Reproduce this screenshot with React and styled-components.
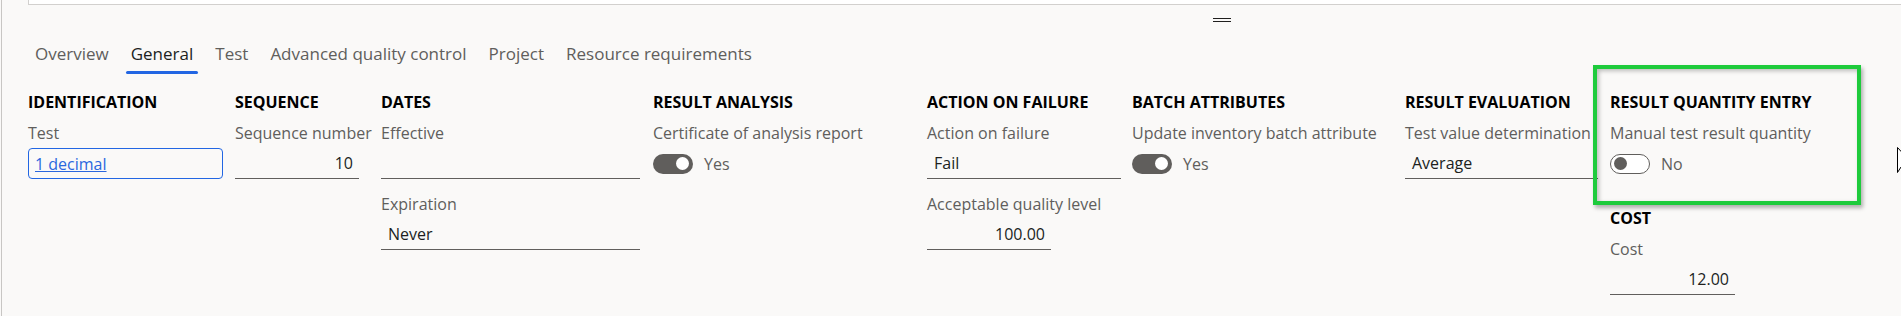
import styled, { createGlobalStyle } from "styled-components";

const GlobalStyle = createGlobalStyle`
  html, body {
    margin: 0;
    padding: 0;
    background: #faf9f8;
  }
  body {
    font-family: "Open Sans", "Noto Sans", sans-serif;
    font-size: 16px;
    color: #201f1e;
  }
`;

const Page = styled.div`
  position: relative;
  margin-left: 1px;
  height: 316px;
  border-left: 1px solid #c8c6c4;
  background: #faf9f8;
  overflow: hidden;
`;

const TopStrip = styled.div`
  margin-left: 26px;
  height: 4px;
  background: #fff;
  border-left: 1px solid #d2d0ce;
  border-bottom: 1px solid #d2d0ce;
`;

const SplitterRow = styled.div`
  display: flex;
  margin-top: 13px;
  padding-left: 1211px;
`;

const Grip = styled.div`
  width: 18px;
  height: 2px;
  border-top: 1px solid #201f1e;
  border-bottom: 1px solid #201f1e;
`;

const TabBar = styled.div`
  display: flex;
  margin-top: 21px;
  padding-left: 22px;
`;

const Tab = styled.div`
  padding: 0 11px;
  height: 31px;
  line-height: 22px;
  font-size: 17px;
  color: ${(p) => (p.$active ? "#201f1e" : "#605e5c")};
  white-space: nowrap;

  span {
    position: relative;
    display: inline-block;
  }
  span::after {
    content: "";
    display: ${(p) => (p.$active ? "block" : "none")};
    position: absolute;
    left: -5px;
    right: -5px;
    top: 28px;
    height: 3px;
    border-radius: 2px;
    background: #2266e3;
  }
`;

const Sections = styled.div`
  display: flex;
  align-items: flex-start;
  gap: 12px;
  margin-top: 17px;
  padding-left: 26px;
`;

const Column = styled.div`
  display: flex;
  flex-direction: column;
  flex-shrink: 0;
  width: ${(p) => p.$width}px;
`;

const Group = styled.div`
  position: relative;
  margin-bottom: 28px;

  &::after {
    content: "";
    display: ${(p) => (p.$highlight ? "block" : "none")};
    position: absolute;
    top: -26px;
    left: -17px;
    width: 268px;
    height: 140px;
    box-sizing: border-box;
    border: 4px solid #1ecb3c;
    box-shadow: 2px 3px 4px rgba(0, 0, 0, 0.3), inset 2px 2px 4px rgba(0, 0, 0, 0.25);
    pointer-events: none;
  }
`;

const GroupTitle = styled.div`
  font-size: 16px;
  font-weight: 700;
  line-height: 22px;
  color: #000;
  white-space: nowrap;
  margin-bottom: 9px;
`;

const Field = styled.div`
  margin-bottom: 14px;
  &:last-child {
    margin-bottom: 0;
  }
`;

const Label = styled.div`
  font-size: 16px;
  line-height: 22px;
  color: #605e5c;
  white-space: nowrap;
  margin-bottom: 4px;
`;

const TextBox = styled.div`
  box-sizing: border-box;
  width: ${(p) => p.$width}px;
  height: 31px;
  padding: 0 6px 0 7px;
  display: flex;
  align-items: center;
  justify-content: ${(p) => (p.$right ? "flex-end" : "flex-start")};
  border-bottom: 1px solid #605e5c;
  font-size: 16px;
  color: #201f1e;
`;

const LookupBox = styled.div`
  box-sizing: border-box;
  width: ${(p) => p.$width}px;
  height: 31px;
  padding: 0 6px;
  display: flex;
  align-items: center;
  border: 1px solid #2266e3;
  border-radius: 4px;

  a {
    color: #2b67de;
    text-decoration: underline;
    font-size: 16px;
  }
`;

const ToggleRow = styled.div`
  height: 31px;
  display: flex;
  align-items: center;
  gap: 11px;
  color: #605e5c;
  font-size: 16px;
`;

const Track = styled.div`
  box-sizing: border-box;
  width: 40px;
  height: 20px;
  border-radius: 10px;
  display: flex;
  align-items: center;
  justify-content: ${(p) => (p.$on ? "flex-end" : "flex-start")};
  padding: 0 ${(p) => (p.$on ? 4 : 3)}px;
  background: ${(p) => (p.$on ? "#605e5c" : "#fff")};
  border: ${(p) => (p.$on ? "none" : "1px solid #605e5c")};
`;

const Knob = styled.div`
  width: 13px;
  height: 13px;
  border-radius: 50%;
  background: ${(p) => (p.$on ? "#fff" : "#605e5c")};
`;

const Cursor = styled.svg`
  position: absolute;
  left: 1895px;
  top: 147px;
`;

const tabs = [
  "Overview",
  "General",
  "Test",
  "Advanced quality control",
  "Project",
  "Resource requirements",
];

const columns = [
  { width: 195, groups: [{ title: "IDENTIFICATION", fields: [{ label: "Test", type: "lookup", value: "1 decimal", width: 195 }] }] },
  { width: 134, groups: [{ title: "SEQUENCE", fields: [{ label: "Sequence number", type: "text", value: "10", width: 124, right: true }] }] },
  {
    width: 260,
    groups: [
      {
        title: "DATES",
        fields: [
          { label: "Effective", type: "text", value: "", width: 259 },
          { label: "Expiration", type: "text", value: "Never", width: 259 },
        ],
      },
    ],
  },
  { width: 262, groups: [{ title: "RESULT ANALYSIS", fields: [{ label: "Certificate of analysis report", type: "toggle", on: true }] }] },
  {
    width: 193,
    groups: [
      {
        title: "ACTION ON FAILURE",
        fields: [
          { label: "Action on failure", type: "text", value: "Fail", width: 194 },
          { label: "Acceptable quality level", type: "text", value: "100.00", width: 124, right: true },
        ],
      },
    ],
  },
  { width: 261, groups: [{ title: "BATCH ATTRIBUTES", fields: [{ label: "Update inventory batch attribute", type: "toggle", on: true }] }] },
  { width: 193, groups: [{ title: "RESULT EVALUATION", fields: [{ label: "Test value determination", type: "text", value: "Average", width: 193 }] }] },
  {
    width: 230,
    groups: [
      { title: "RESULT QUANTITY ENTRY", highlight: true, fields: [{ label: "Manual test result quantity", type: "toggle", on: false }] },
      { title: "COST", fields: [{ label: "Cost", type: "text", value: "12.00", width: 125, right: true }] },
    ],
  },
];

function Control({ field }) {
  if (field.type === "lookup") {
    return (
      <LookupBox $width={field.width}>
        <a href="#">{field.value}</a>
      </LookupBox>
    );
  }
  if (field.type === "toggle") {
    return (
      <ToggleRow>
        <Track $on={field.on}>
          <Knob $on={field.on} />
        </Track>
        {field.on ? "Yes" : "No"}
      </ToggleRow>
    );
  }
  return (
    <TextBox $width={field.width} $right={field.right}>
      {field.value}
    </TextBox>
  );
}

export default function App() {
  return (
    <>
      <GlobalStyle />
      <Page>
        <TopStrip />
        <SplitterRow>
          <Grip />
        </SplitterRow>
        <TabBar>
          {tabs.map((t) => (
            <Tab key={t} $active={t === "General"}>
              <span>{t}</span>
            </Tab>
          ))}
        </TabBar>
        <Sections>
          {columns.map((col, i) => (
            <Column key={i} $width={col.width}>
              {col.groups.map((g) => (
                <Group key={g.title} $highlight={g.highlight}>
                  <GroupTitle>{g.title}</GroupTitle>
                  {g.fields.map((f) => (
                    <Field key={f.label}>
                      <Label>{f.label}</Label>
                      <Control field={f} />
                    </Field>
                  ))}
                </Group>
              ))}
            </Column>
          ))}
        </Sections>
        <Cursor width="14" height="26" viewBox="0 0 14 26">
          <path d="M0.5 0.5 L0.5 25.5 L4 20 L12 13 Z" fill="#fff" stroke="#000" strokeWidth="1" />
        </Cursor>
      </Page>
    </>
  );
}
